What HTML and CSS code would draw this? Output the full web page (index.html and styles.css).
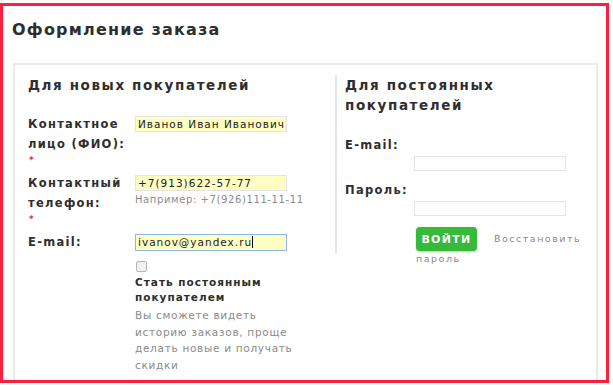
FILE: index.html
```html
<!DOCTYPE html>
<html lang="ru">
<head>
<meta charset="UTF-8">
<title>Оформление заказа</title>
<link rel="stylesheet" href="styles.css">
</head>
<body>
<div class="frame">
    <h1>Оформление заказа</h1>
    <div class="box">
        <div class="col col-new">
            <h2>Для новых покупателей</h2>
            <div class="form">
                <div class="label">Контактное лицо (ФИО):<span class="req">*</span></div>
                <div class="field"><div class="input filled">Иванов Иван Иванович</div></div>

                <div class="label">Контактный телефон:<span class="req">*</span></div>
                <div class="field">
                    <div class="input filled">+7(913)622-57-77</div>
                    <div class="hint">Например: +7(926)111-11-11</div>
                </div>

                <div class="label">E-mail:</div>
                <div class="field">
                    <div class="input filled focus">ivanov@yandex.ru<span class="caret"></span></div>
                    <div class="check"></div>
                    <div class="check-title">Стать постоянным<br>покупателем</div>
                    <div class="check-desc">Вы сможете видеть<br>историю заказов, проще<br>делать новые и получать<br>скидки</div>
                </div>
            </div>
        </div>
        <div class="col col-old">
            <h2>Для постоянных покупателей</h2>
            <div class="label">E-mail:</div>
            <div class="input empty"></div>
            <div class="label">Пароль:</div>
            <div class="input empty"></div>
            <div class="login">
                <button>ВОЙТИ</button><a href="#">Восстановить</a>
                <a href="#" class="second">пароль</a>
            </div>
        </div>
    </div>
</div>
</body>
</html>
```

FILE: styles.css
```css
body {
    margin: 0;
    background-color: #fff;
    font-family: "DejaVu Sans", "Open Sans", sans-serif;
    color: #2e2e2e;
}
.frame {
    box-sizing: border-box;
    width: 609px;
    height: 380px;
    margin-top: 3px;
    border: 3px solid #fd1f3d;
    overflow: hidden;
    padding: 13px 8px 0 10px;
}
h1 {
    margin: 0 0 0 -1px;
    font-size: 16px;
    font-weight: bold;
    letter-spacing: 1.2px;
    line-height: 22px;
}
.box {
    margin-top: 22px;
    border: 2px solid #ebebeb;
    border-bottom: none;
    height: 400px;
    display: flex;
    padding: 10px 0 0 13px;
}
h2 {
    margin: 0;
    font-size: 13.5px;
    font-weight: bold;
    letter-spacing: 1.6px;
    line-height: 20px;
}
.col-new {
    width: 307px;
}
.col-old {
    width: 200px;
    border-left: 2px solid #e6e6e6;
    padding-left: 8px;
    height: 179px;
}
.form {
    display: grid;
    grid-template-columns: 107px 152px;
    row-gap: 7px;
    margin-top: 19px;
}
.label {
    font-size: 11.5px;
    font-weight: bold;
    letter-spacing: 1.3px;
    line-height: 20px;
}
.req {
    display: block;
    color: #f3223f;
    font-size: 9px;
    line-height: 12px;
    margin-left: 1px;
}
.input {
    box-sizing: border-box;
    height: 16px;
    border: 1px solid #e4e4e4;
    font-size: 10.5px;
    letter-spacing: 1px;
    line-height: 14px;
    padding-left: 2px;
    color: #222;
    white-space: nowrap;
    overflow: hidden;
}
.input.filled {
    background-color: #ffffc4;
    margin-top: 2px;
}
.input.focus {
    border-color: #8fb4e8;
    height: 17px;
}
.caret {
    display: inline-block;
    width: 1px;
    height: 12px;
    background: #000;
    vertical-align: -2px;
}
.hint {
    font-size: 10px;
    letter-spacing: 0.6px;
    color: #8a8a8a;
    margin-top: 2px;
    line-height: 13px;
    white-space: nowrap;
}
.check {
    box-sizing: border-box;
    width: 11px;
    height: 11px;
    border: 1px solid #b5b5b5;
    border-radius: 2px;
    background: #f2f2f2;
    margin: 10px 0 0 1px;
}
.check-title {
    font-size: 10.5px;
    font-weight: bold;
    letter-spacing: 1px;
    line-height: 15px;
    margin-top: 3px;
    white-space: nowrap;
}
.check-desc {
    font-size: 10.5px;
    letter-spacing: 0.7px;
    line-height: 16.5px;
    color: #8a8a8a;
    margin-top: 2px;
    white-space: nowrap;
}
.col-old .label {
    margin-top: 20px;
}
.col-old .label + .input {
    margin: 1px 0 0 69px;
    width: 152px;
    height: 15px;
}
.col-old .input + .label {
    margin-top: 9px;
}
.login {
    margin: 11px 0 0 71px;
    width: 180px;
    display: flex;
    flex-wrap: wrap;
    align-items: center;
    font-size: 9.5px;
    letter-spacing: 1.5px;
    line-height: 14px;
}
.login button {
    font-family: inherit;
    font-size: 11px;
    font-weight: bold;
    letter-spacing: 1.3px;
    color: #fff;
    background-color: #37b93a;
    border: none;
    border-radius: 4px;
    width: 61px;
    height: 24px;
    padding: 0;
    margin-right: 17px;
    box-shadow: 0 1px 2px rgba(0, 0, 0, 0.25);
}
.login a {
    color: #8a8a8a;
    text-decoration: none;
}
.login .second {
    width: 100%;
    margin-top: 1px;
}
```
